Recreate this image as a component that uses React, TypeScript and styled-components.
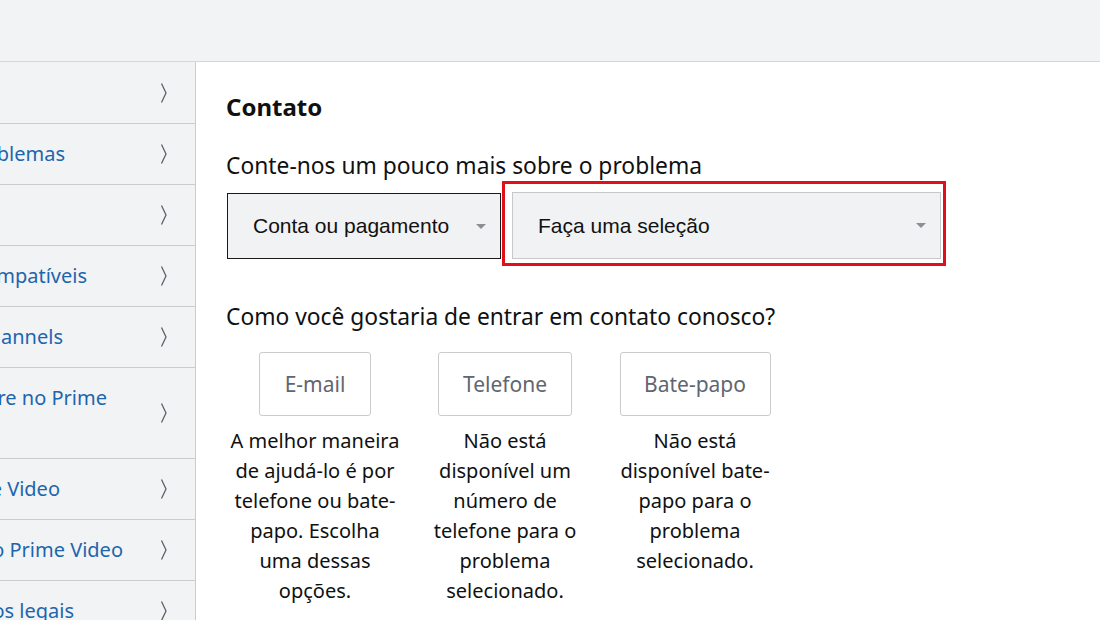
import React, { FC } from "react";
import styled, { createGlobalStyle } from "styled-components";

const GlobalStyle = createGlobalStyle`
  html, body {
    margin: 0;
    padding: 0;
    background: #ffffff;
  }
  body {
    font-family: "Noto Sans", "Open Sans", sans-serif;
    color: #0f1111;
  }
`;

const StyledPage = styled.div`
  width: 1100px;
  height: 620px;
  overflow: hidden;
  display: flex;
  flex-direction: column;
`;

const StyledTopBar = styled.div`
  height: 61px;
  flex-shrink: 0;
  background: #f2f3f5;
  border-bottom: 1px solid #d4d6d8;
`;

const StyledBody = styled.div`
  display: flex;
  flex: 1;
  min-height: 0;
`;

const StyledSidebar = styled.nav`
  width: 195px;
  flex-shrink: 0;
  padding-top: 1px;
  background: #f2f3f5;
  border-right: 1px solid #c9cbcd;
  overflow: hidden;
`;

const StyledNavRow = styled.div<{ $tall?: boolean }>`
  height: ${(p) => (p.$tall ? 90 : 60)}px;
  display: flex;
  align-items: center;
  border-bottom: 1px solid #c9cbcd;
  margin-right: -1px;
`;

const StyledNavLabelBox = styled.div<{ $end: number; $tall?: boolean }>`
  width: ${(p) => p.$end}px;
  flex-shrink: 0;
  display: flex;
  justify-content: flex-end;
  align-self: ${(p) => (p.$tall ? "flex-start" : "center")};
  padding-top: ${(p) => (p.$tall ? 15 : 0)}px;
`;

const StyledNavLabel = styled.span`
  white-space: nowrap;
  font-size: 20px;
  color: #1d65ad;
  line-height: 30px;
`;

const StyledChevron = styled.svg`
  margin-left: auto;
  margin-right: 28px;
  flex-shrink: 0;
`;

const StyledMain = styled.main`
  flex: 1;
  padding: 27px 30px 0 30px;
`;

const StyledHeading = styled.h1`
  margin: 0;
  font-size: 24px;
  font-weight: 700;
  line-height: 36px;
`;

const StyledQuestion = styled.p<{ $gap: number }>`
  margin: ${(p) => p.$gap}px 0 0 0;
  font-size: 22.8px;
  line-height: 30px;
`;

const StyledSelectRow = styled.div`
  display: flex;
  align-items: flex-start;
  margin-left: 1px;
`;

const StyledSelect = styled.div<{ $width: number; $tone: "dark" | "light" }>`
  width: ${(p) => p.$width}px;
  height: ${(p) => (p.$tone === "dark" ? 66 : 67)}px;
  margin-top: ${(p) => (p.$tone === "dark" ? 12 : 0)}px;
  box-sizing: border-box;
  display: flex;
  align-items: center;
  padding: 0 14px 0 25px;
  background: #f0f2f4;
  border: 1px solid ${(p) => (p.$tone === "dark" ? "#1a1a1a" : "#c6c8ca")};
  font-family: "Liberation Sans", Arial, sans-serif;
  font-size: 21px;
  color: #111;
`;

const StyledSelectText = styled.span`
  flex: 1;
`;

const StyledCaret = styled.span`
  width: 0;
  height: 0;
  border-left: 5px solid transparent;
  border-right: 5px solid transparent;
  border-top: 5px solid #8b8e92;
`;

const StyledHighlight = styled.div`
  margin-left: 1px;
  padding: 8px 2px 4px 7px;
  border: 3px solid #e0101a;
  display: flex;
`;

const StyledOptions = styled.div`
  display: flex;
  gap: 14px;
  margin-top: 20px;
  margin-left: 1px;
`;

const StyledOption = styled.div`
  width: 176px;
  display: flex;
  flex-direction: column;
  align-items: center;
`;

const StyledOptionButton = styled.div<{ $width: number }>`
  width: ${(p) => p.$width}px;
  height: 64px;
  box-sizing: border-box;
  border: 1px solid #c9cbcd;
  border-radius: 3px;
  display: flex;
  align-items: center;
  justify-content: center;
  font-size: 21px;
  color: #5f6670;
  background: #ffffff;
`;

const StyledOptionText = styled.p`
  margin: 10px 0 0 0;
  text-align: center;
  font-size: 20px;
  line-height: 30px;
  color: #0f1111;
`;

type NavItem = { label: string; end: number; tall?: boolean };

const navItems: NavItem[] = [
  { label: "", end: 10 },
  { label: "Solução de problemas", end: 65 },
  { label: "", end: 10 },
  { label: "Dispositivos compatíveis", end: 87 },
  { label: "Prime Video Channels", end: 63 },
  { label: "Alugue ou compre no Prime", end: 107, tall: true },
  { label: "Controle parental do Prime Video", end: 60 },
  { label: "Benefícios do Prime Video", end: 123 },
  { label: "Termos e avisos legais", end: 74 },
];

const options = [
  {
    name: "E-mail",
    width: 112,
    text: "A melhor maneira de ajudá-lo é por telefone ou bate-papo. Escolha uma dessas opções.",
  },
  {
    name: "Telefone",
    width: 134,
    text: "Não está disponível um número de telefone para o problema selecionado.",
  },
  {
    name: "Bate-papo",
    width: 151,
    text: "Não está disponível bate-papo para o problema selecionado.",
  },
];

const Chevron: FC = () => (
  <StyledChevron width="8" height="22" viewBox="0 0 8 22">
    <polyline
      points="1.5,1.5 6,11 1.5,20.5"
      fill="none"
      stroke="#5d6166"
      strokeWidth="1.3"
    />
  </StyledChevron>
);

const App: FC = () => {
  return (
    <StyledPage>
      <GlobalStyle />
      <StyledTopBar />
      <StyledBody>
        <StyledSidebar>
          {navItems.map((item, i) => (
            <StyledNavRow key={i} $tall={item.tall}>
              <StyledNavLabelBox $end={item.end} $tall={item.tall}>
                <StyledNavLabel>{item.label}</StyledNavLabel>
              </StyledNavLabelBox>
              <Chevron />
            </StyledNavRow>
          ))}
        </StyledSidebar>
        <StyledMain>
          <StyledHeading>Contato</StyledHeading>
          <StyledQuestion $gap={26}>
            Conte-nos um pouco mais sobre o problema
          </StyledQuestion>
          <StyledSelectRow>
            <StyledSelect $width={274} $tone="dark">
              <StyledSelectText>Conta ou pagamento</StyledSelectText>
              <StyledCaret />
            </StyledSelect>
            <StyledHighlight>
              <StyledSelect $width={429} $tone="light">
                <StyledSelectText>Faça uma seleção</StyledSelectText>
                <StyledCaret />
              </StyledSelect>
            </StyledHighlight>
          </StyledSelectRow>
          <StyledQuestion $gap={36}>
            Como você gostaria de entrar em contato conosco?
          </StyledQuestion>
          <StyledOptions>
            {options.map((o) => (
              <StyledOption key={o.name}>
                <StyledOptionButton $width={o.width}>{o.name}</StyledOptionButton>
                <StyledOptionText>{o.text}</StyledOptionText>
              </StyledOption>
            ))}
          </StyledOptions>
        </StyledMain>
      </StyledBody>
    </StyledPage>
  );
};

export default App;
